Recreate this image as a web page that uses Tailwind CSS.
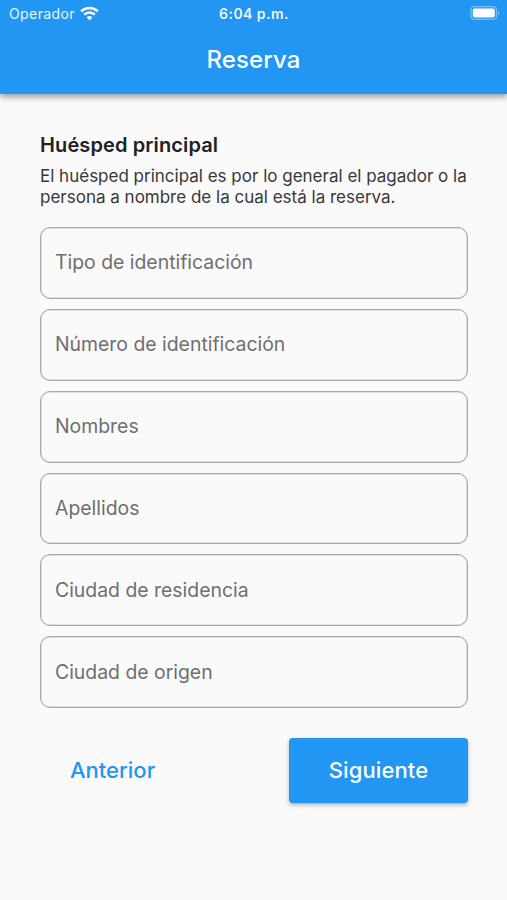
<!DOCTYPE html>
<html lang="es">
<head>
    <meta charset="UTF-8">
    <meta name="viewport" content="width=device-width, initial-scale=1.0">
    <title>Reserva</title>
    <script src="https://cdn.jsdelivr.net/npm/@tailwindcss/browser@4"></script>
</head>
<body class="bg-[#fafafa] font-[Inter,sans-serif] h-[900px] overflow-hidden">
    <header class="bg-[#2196f3] text-white h-[94px] shadow-[0_3px_6px_rgba(0,0,0,0.38)]">
        <!-- Status bar -->
        <div class="grid grid-cols-3 items-center h-[27px] pl-[9px] pr-[7px] text-sm">
            <div class="flex items-center gap-[5px]">
                <span class="tracking-[0.4px] text-white/90">Operador</span>
                <svg class="w-[19px] h-[15px] -mt-px" viewBox="0 0 19 15" fill="none" stroke="currentColor" stroke-width="2.5">
                    <path d="M1.2 5.4a12 12 0 0 1 16.6 0M4.2 8.7a7.6 7.6 0 0 1 10.6 0"/>
                    <path d="M9.5 14.3l-2.9-2.9a4.2 4.2 0 0 1 5.8 0z" fill="currentColor" stroke="none"/>
                </svg>
            </div>
            <span class="text-center font-semibold tracking-[0.45px] -ml-px text-white/95">6:04 p.m.</span>
            <svg class="w-[30px] h-[14px] justify-self-end -mt-px" viewBox="0 0 30 14">
                <rect x="1" y="0.6" width="25.5" height="12.8" rx="3.5" fill="none" stroke="#fff" stroke-opacity="0.4" stroke-width="1.2"/>
                <rect x="2.8" y="2.4" width="22" height="9.2" rx="1.8" fill="#fff"/>
                <path d="M28 5q2.4 2 0 4z" fill="#fff" fill-opacity="0.5"/>
            </svg>
        </div>
        <h1 class="text-center text-2xl leading-[66px] font-medium tracking-[0.1px]">Reserva</h1>
    </header>
    <main class="pl-10 pr-[39px] pt-[39px] text-[#212121]">
        <h2 class="text-xl leading-6 font-semibold tracking-[0.12px]">Huésped principal</h2>
        <p class="mt-[9px] text-[17px] leading-[21px] whitespace-nowrap text-[#383838]">El huésped principal es por lo general el pagador o la<br>persona a nombre de la cual está la reserva.</p>
        <form class="mt-[19px] flex flex-col gap-[10px] text-[19.4px] leading-7 text-[#6f6f6f]">
            <div class="h-[71.85px] border border-[#a8a8a8] rounded-[10px] px-[14px] pb-px flex items-center shadow-[inset_0_0_0_0.5px_#c4c4c4]">Tipo de identificación</div>
            <div class="h-[71.85px] border border-[#a8a8a8] rounded-[10px] px-[14px] pb-px flex items-center shadow-[inset_0_0_0_0.5px_#c4c4c4]">Número de identificación</div>
            <div class="h-[71.85px] border border-[#a8a8a8] rounded-[10px] px-[14px] pb-px flex items-center shadow-[inset_0_0_0_0.5px_#c4c4c4]">Nombres</div>
            <div class="h-[71.85px] border border-[#a8a8a8] rounded-[10px] px-[14px] pb-px flex items-center shadow-[inset_0_0_0_0.5px_#c4c4c4]">Apellidos</div>
            <div class="h-[71.85px] border border-[#a8a8a8] rounded-[10px] px-[14px] pb-px flex items-center shadow-[inset_0_0_0_0.5px_#c4c4c4]">Ciudad de residencia</div>
            <div class="h-[71.85px] border border-[#a8a8a8] rounded-[10px] px-[14px] pb-px flex items-center shadow-[inset_0_0_0_0.5px_#c4c4c4]">Ciudad de origen</div>
        </form>
        <div class="mt-[29.5px] flex justify-between text-[22px] leading-8 font-medium">
            <button class="h-[65px] px-[30px] text-[#2196f3]">Anterior</button>
            <button class="w-[179px] h-[65px] rounded bg-[#2196f3] text-white tracking-[0.1px] shadow-[0_2px_4px_rgba(0,0,0,0.3)]">Siguiente</button>
        </div>
    </main>
</body>
</html>
